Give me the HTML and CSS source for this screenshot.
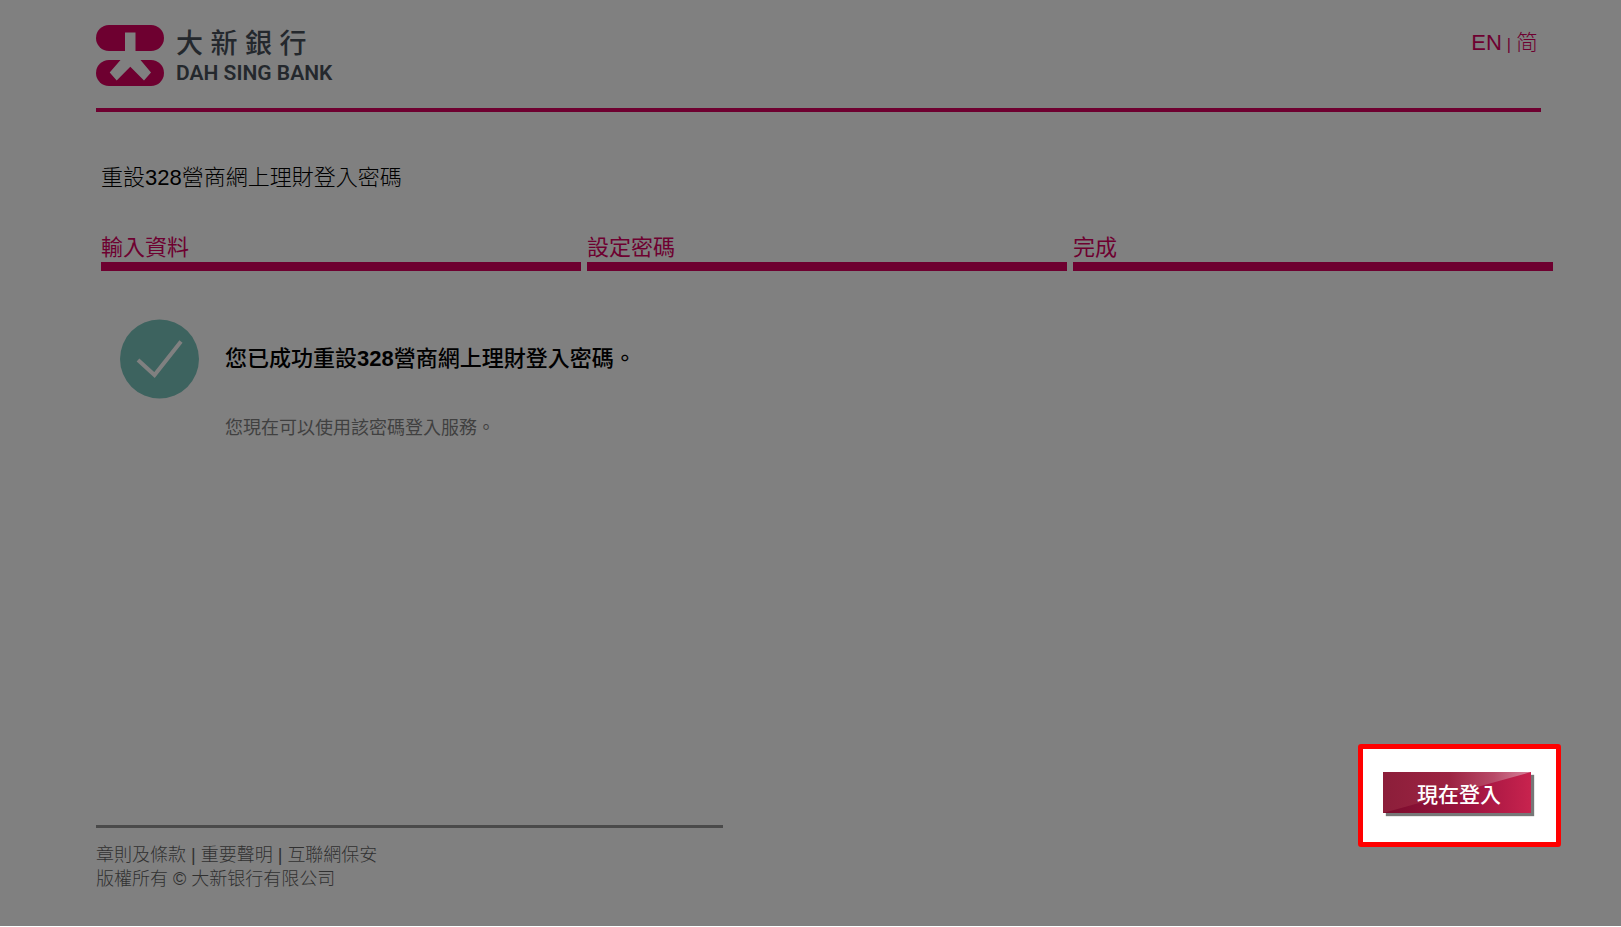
FILE: index.html
```html
<!DOCTYPE html>
<html lang="zh-Hant">
<head>
  <meta charset="UTF-8" />
  <meta name="viewport" content="width=device-width, initial-scale=1.0" />
  <title>大新銀行</title>
  <link rel="stylesheet" href="styles.css">
</head>
<body>
  <header class="header">
    <a class="logo" href="#">
      <svg class="logo-mark" viewBox="0 0 68 61" aria-hidden="true">
        <rect class="logo-pill" x="0" y="0" width="68" height="26" rx="13" />
        <rect class="logo-pill" x="0" y="35" width="68" height="26" rx="13" />
        <path class="logo-figure" d="M29 7.5h10.5V27h5v8l10.5 12.5-7 8-13.700-13.800L20.700 55.500l-7-8L24.500 35v-8H29z" />
      </svg>
      <span class="logo-text">
        <span class="logo-zh">大 新 銀 行</span>
        <span class="logo-en">DAH SING BANK</span>
      </span>
    </a>
    <nav class="lang">
      <a href="#">EN</a>
      <span class="lang-divider">|</span>
      <a href="#" lang="zh-Hans">简</a>
    </nav>
  </header>

  <main class="main">
    <h1 class="title">重設328營商網上理財登入密碼</h1>

    <ol class="steps">
      <li>輸入資料</li>
      <li>設定密碼</li>
      <li>完成</li>
    </ol>

    <section class="result">
      <svg class="result-icon" viewBox="0 0 80 80" aria-hidden="true">
        <circle cx="39.500" cy="40" r="39.500" />
        <path d="M18 41 34.500 56 61 22.500" />
      </svg>
      <div class="result-text">
        <h2>您已成功重設<strong>328</strong>營商網上理財登入密碼。</h2>
        <p>您現在可以使用該密碼登入服務。</p>
      </div>
    </section>
  </main>

  <div class="bottom">
    <footer class="footer">
      <div><a href="#">章則及條款</a> | <a href="#">重要聲明</a> | <a href="#">互聯網保安</a></div>
      <div>版權所有 © <span lang="zh-Hans">大新银行有限公司</span></div>
    </footer>
    <div class="highlight">
      <button class="login-button" type="button">現在登入</button>
    </div>
  </div>
</body>
</html>
```

FILE: styles.css
```css
* {
  box-sizing: border-box;
}
html {
  background-color: #fff;
}
body {
  display: flex;
  flex-direction: column;
  min-height: 100vh;
  margin: 0;
  padding: 0 80px 0 96px;
  border-bottom: 1px solid #fff;
  background-color: #808080;
  color: #000;
  font-family: "Liberation Sans", "Noto Sans CJK TC", sans-serif;
  font-size: 22px;
  font-weight: 300;
}
a {
  color: inherit;
  text-decoration: none;
}

/* header */
.header {
  display: flex;
  justify-content: space-between;
  align-items: flex-start;
  padding: 25px 0 22px;
  border-bottom: 4px solid #6e0030;
}
.logo {
  display: flex;
  gap: 12px;
  color: #24282d;
}
.logo-mark {
  width: 68px;
  height: 61px;
}
.logo-pill {
  fill: #6e0030;
}
.logo-figure {
  fill: #808080;
}
.logo-text {
  display: flex;
  flex-direction: column;
}
.logo-zh {
  font-size: 27px;
  font-weight: 500;
  line-height: 38px;
}
.logo-en {
  font-family: Roboto, sans-serif;
  font-size: 21px;
  font-weight: 600;
  line-height: 20px;
}
.lang {
  display: flex;
  align-items: baseline;
  gap: 5px;
  padding-right: 3px;
  color: #6e0030;
  line-height: 36px;
}
.lang-divider {
  font-size: 16px;
}

/* content */
.main {
  flex: 1;
  margin: 0 -12px 0 5px;
}
.title {
  margin: 48px 0 0;
  font-size: 22px;
  font-weight: 300;
  line-height: 36px;
}
.steps {
  display: flex;
  gap: 6px;
  margin: 38px 0 0;
  padding: 0;
  color: #6e0030;
  list-style: none;
}
.steps li {
  flex: 1;
  border-bottom: 9px solid #6e0030;
  font-weight: 400;
  line-height: 28px;
}
.result {
  display: flex;
  align-items: flex-start;
  gap: 25px;
  margin-top: 48px;
  padding-left: 19px;
}
.result-icon {
  width: 80px;
  height: 80px;
}
.result-icon circle {
  fill: #3d635f;
}
.result-icon path {
  fill: none;
  stroke: #808080;
  stroke-width: 4;
}
.result-text h2 {
  margin: 0;
  font-size: 22px;
  font-weight: 500;
  line-height: 80px;
}
.result-text p {
  margin: 16px 0 0;
  color: #404040;
  font-size: 18px;
  font-weight: 400;
  line-height: 26px;
}

/* footer and login button */
.bottom {
  display: flex;
  justify-content: space-between;
  align-items: flex-start;
  padding-bottom: 35px;
}
.footer {
  width: 43.4%;
  min-width: 320px;
  margin-top: 81px;
  padding-top: 15px;
  border-top: 3px solid #4a4a4a;
  color: #303030;
  font-size: 18px;
  line-height: 24px;
}
.highlight {
  margin-right: -20px;
  padding: 23px 25px 29px 20px;
  border: 5px solid #f00;
  border-radius: 3px;
  background-color: #fff;
}
.login-button {
  position: relative;
  z-index: 0;
  display: block;
  width: 148px;
  height: 41px;
  padding: 0 0 0 4px;
  border: none;
  background: linear-gradient(to right, #780c2c, #a01440 60%, #c8234e);
  box-shadow: 3px 3px 1px #777;
  color: #fff;
  font-family: inherit;
  font-size: 21px;
  font-weight: 500;
  cursor: pointer;
}
/* glossy upper half */
.login-button::before {
  content: "";
  position: absolute;
  inset: 0;
  z-index: -1;
  background: linear-gradient(to right, #8c1e3a, #9c2442 45%, #b84a68 75%, #d8849c);
  clip-path: polygon(0 0, 100% 0, 0 100%);
}
```
